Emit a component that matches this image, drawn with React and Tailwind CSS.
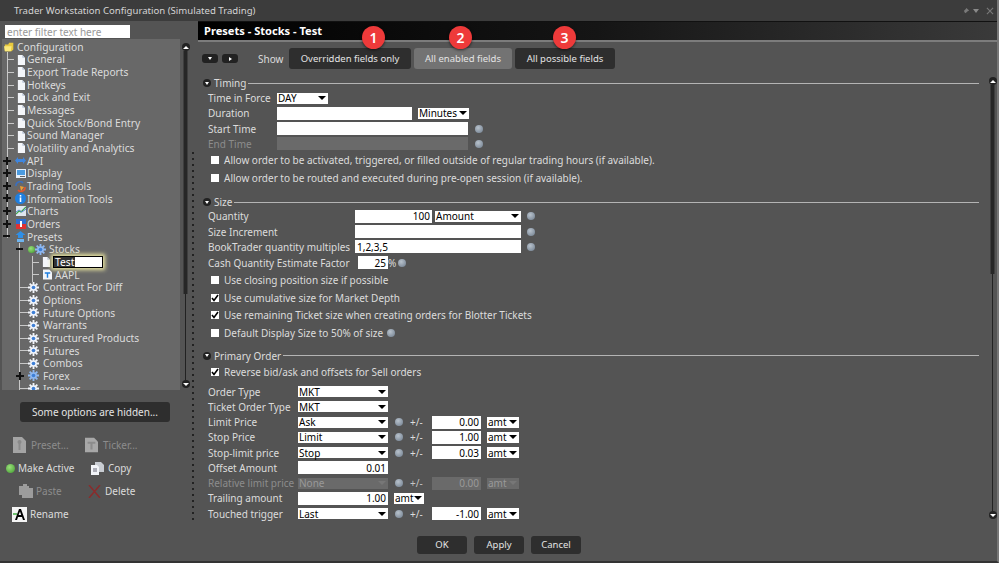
import React from "react";

const Doc = ({ className = "" }) => (
  <svg width="8" height="10" viewBox="0 0 9 11" className={className}>
    <path d="M1 0h5l3 3v8H1z" fill="#f4f6fa" />
    <path d="M6 0l3 3H6z" fill="#b9c4d6" />
  </svg>
);

const Gear = ({ size = 11, color = "#f2f5fb" }) => (
  <svg width={size} height={size} viewBox="0 0 12 12">
    <g stroke={color} strokeWidth="2">
      <path d="M6 0v12M0 6h12M1.800 1.800l8.400 8.400M10.200 1.800l-8.400 8.400" />
    </g>
    <circle cx="6" cy="6" r="3.600" fill={color} />
    <circle cx="6" cy="6" r="2" fill="#3d7fd6" />
  </svg>
);

const Folder = () => (
  <svg width="13" height="12" viewBox="0 0 13 12">
    <path d="M1 3h4l1-2h5v8l-2 2H1z" fill="#e8c93e" />
    <path d="M0 5h9l-1 6H1z" fill="#fbe97c" />
  </svg>
);

const ApiIcon = () => (
  <svg width="11" height="9" viewBox="0 0 11 9">
    <path d="M0 4.500L3 1v2h5V1l3 3.500L8 8V6H3v2z" fill="#3f86de" />
  </svg>
);

const DisplayIcon = () => (
  <svg width="10" height="9" viewBox="0 0 10 9">
    <rect width="10" height="9" fill="#e8f0fa" />
    <rect x="1" y="1" width="8" height="5" fill="#4b9be0" />
    <rect x="4" y="7" width="5" height="1" fill="#666" />
  </svg>
);

const TradingIcon = () => (
  <svg width="11" height="11" viewBox="0 0 11 11">
    <path d="M1 5a4 4 0 0 1 7-3" stroke="#3a6fc0" strokeWidth="1.600" fill="none" />
    <path d="M10 6a4 4 0 0 1-7 3" stroke="#e8552a" strokeWidth="1.600" fill="none" />
    <path d="M5 5l4 1-3 4z" fill="#f0a030" />
  </svg>
);

const InfoIcon = () => (
  <svg width="11" height="11" viewBox="0 0 11 11">
    <circle cx="5.500" cy="5.500" r="5.500" fill="#1f7fe0" />
    <rect x="4.700" y="2" width="1.600" height="1.600" fill="#fff" />
    <rect x="4.700" y="4.400" width="1.600" height="4.600" fill="#fff" />
  </svg>
);

const ChartIcon = () => (
  <svg width="10" height="10" viewBox="0 0 10 10">
    <rect width="10" height="10" fill="#dfe6ee" />
    <path d="M0 8l3-3 2 1 5-5" stroke="#3fa34a" strokeWidth="1.200" fill="none" />
    <path d="M0 6l3-2 3 2 4-3" stroke="#5a8ccc" strokeWidth="1" fill="none" />
  </svg>
);

const OrdersIcon = () => (
  <svg width="10" height="10" viewBox="0 0 10 10">
    <rect width="10" height="5" fill="#2d6fd0" />
    <rect y="5" width="10" height="5" fill="#e03131" />
    <rect x="4" y="2" width="2" height="6" fill="#fff" />
  </svg>
);

const PresetsIcon = () => (
  <svg width="11" height="11" viewBox="0 0 11 11">
    <path d="M5.500 0l5 4H8v3H3V4H.5z" fill="#2f8fe6" />
    <rect x="2" y="8" width="7" height="3" fill="#6fb4ee" />
  </svg>
);

const TickerIcon = ({ color = "#1f7fe0", bg = "#f4f6fa", w = 9, h = 11 }) => (
  <svg width={w} height={h} viewBox="0 0 10 11">
    <path d="M0 0h7l3 3v8H0z" fill={bg} />
    <path d="M2 3h6v1.600H5.800V9H4.200V4.600H2z" fill={color} />
  </svg>
);

const PresetFileIcon = () => (
  <svg width="13" height="16" viewBox="0 0 13 16">
    <path d="M0 0h9l4 4v12H0z" fill="#a4a4a4" />
    <circle cx="6.500" cy="5" r="2" fill="#8a8a8a" />
    <path d="M5.500 6h2v7h-2z" fill="#8a8a8a" />
  </svg>
);

const GreenDot = ({ size = "w-[7px] h-[7px]" }) => (
  <span className={`${size} rounded-full shrink-0 bg-[radial-gradient(circle_at_40%_35%,#9adf7a,#3f9a2e)]`} />
);

const treeRows = [
  { label: "Configuration", pad: "pl-[2px]", gap: "gap-[2px]", icon: <Folder /> },
  { label: "General", pad: "pl-[13px]", leaf: 1, icon: <Doc /> },
  { label: "Export Trade Reports", pad: "pl-[13px]", leaf: 1, icon: <Doc /> },
  { label: "Hotkeys", pad: "pl-[13px]", leaf: 1, icon: <Doc /> },
  { label: "Lock and Exit", pad: "pl-[13px]", leaf: 1, icon: <Doc /> },
  { label: "Messages", pad: "pl-[13px]", leaf: 1, icon: <Doc /> },
  { label: "Quick Stock/Bond Entry", pad: "pl-[13px]", leaf: 1, icon: <Doc /> },
  { label: "Sound Manager", pad: "pl-[13px]", leaf: 1, icon: <Doc /> },
  { label: "Volatility and Analytics", pad: "pl-[13px]", leaf: 1, icon: <Doc /> },
  { label: "API", pad: "pl-[13px]", plus: "left-[1px]", icon: <ApiIcon /> },
  { label: "Display", pad: "pl-[13px]", plus: "left-[1px]", icon: <DisplayIcon /> },
  { label: "Trading Tools", pad: "pl-[13px]", plus: "left-[1px]", icon: <TradingIcon /> },
  { label: "Information Tools", pad: "pl-[13px]", plus: "left-[1px]", icon: <InfoIcon /> },
  { label: "Charts", pad: "pl-[13px]", plus: "left-[1px]", icon: <ChartIcon /> },
  { label: "Orders", pad: "pl-[13px]", plus: "left-[1px]", icon: <OrdersIcon /> },
  { label: "Presets", pad: "pl-[13px]", minus: "left-[1px]", icon: <PresetsIcon /> },
];

const presetRows = [
  { label: "Contract For Diff" },
  { label: "Options" },
  { label: "Future Options" },
  { label: "Warrants" },
  { label: "Structured Products" },
  { label: "Futures" },
  { label: "Combos" },
  { label: "Forex", plus: true, blue: true },
  { label: "Indexes" },
];

const Plus = ({ className = "" }) => (
  <svg width="8" height="8" viewBox="0 0 8 8" className={`absolute top-[2px] ${className}`}>
    <path d="M4 0v8M0 4h8" stroke="#111" strokeWidth="2" />
  </svg>
);

const TreeRow = ({ row }) => (
  <div className={`relative flex h-[12.67px] items-center ${row.gap || "gap-[1px]"} ${row.pad}`}>
    {row.leaf && <span className="absolute left-[5px] top-[6px] h-px w-[7px] bg-[#c8c8c8]" />}
    {row.plus && <Plus className={row.plus} />}
    {row.minus && <span className={`absolute top-[5px] h-[2px] w-[7px] bg-[#111] ${row.minus}`} />}
    <span className="flex w-[11px] shrink-0 justify-center">{row.icon}</span>
    <span className="whitespace-nowrap">{row.label}</span>
  </div>
);

const Tree = () => (
  <div className="relative h-[351px] w-[178px] overflow-hidden bg-[#686868] pt-[1.6px] text-[10.25px] text-[#dcdcdc]">
    <span className="absolute left-[5px] top-[13px] h-[186px] w-px bg-[#c8c8c8]" />
    <span className="absolute left-[17px] top-[204px] h-[147px] w-px bg-[#c8c8c8]" />
    <span className="absolute left-[30px] top-[217px] h-[26px] w-px bg-[#c8c8c8]" />
    {treeRows.map((row) => (
      <TreeRow key={row.label} row={row} />
    ))}
    <div className="relative flex h-[12.67px] items-center pl-[26px]">
      <span className="absolute left-[14px] top-[5px] h-[2px] w-[7px] bg-[#111]" />
      <GreenDot />
      <span className="mr-[3px] flex"><Gear color="#8fb8f0" /></span>
      <span>Stocks</span>
    </div>
    <div className="relative flex h-[12.67px] items-center pl-[40px]">
      <span className="absolute left-[30px] top-[6px] h-px w-[7px] bg-[#c8c8c8]" />
      <Doc />
      <div className="ml-[3px] flex h-[12px] w-[50px] border border-black bg-white shadow-[0_0_4px_2px_#e8e4a0]">
        <span className="bg-[#333] px-[1px] leading-[10px] text-white">Test</span>
      </div>
    </div>
    <div className="relative flex h-[12.67px] items-center gap-[3px] pl-[41px]">
      <span className="absolute left-[30px] top-[6px] h-px w-[7px] bg-[#c8c8c8]" />
      <TickerIcon />
      <span>AAPL</span>
    </div>
    {presetRows.map((row) => (
      <div key={row.label} className="relative flex h-[12.67px] items-center gap-[4px] pl-[26px]">
        {row.plus ? (
          <Plus className="left-[14px]" />
        ) : (
          <span className="absolute left-[17px] top-[6px] h-px w-[9px] bg-[#c8c8c8]" />
        )}
        <Gear color={row.blue ? "#8fb8f0" : "#f2f5fb"} />
        <span className="whitespace-nowrap">{row.label}</span>
      </div>
    ))}
  </div>
);

const ScrollBall = ({ up }) => (
  <span className="flex h-[8px] w-[8px] shrink-0 items-center justify-center rounded-full bg-[#222]">
    <span
      className={`h-0 w-0 border-x-[3px] border-x-transparent ${up ? "border-b-[3px] border-b-white" : "border-t-[3px] border-t-white"}`}
    />
  </span>
);

const Scrollbar = ({ thumb, h }) => (
  <div className={`flex w-[9px] flex-col items-center ${h}`}>
    <ScrollBall up />
    <div className="flex flex-1 flex-col items-center">
      <div className={`w-[5px] rounded-[1px] border-x border-x-[#3e3e3e] bg-[#262626] ${thumb}`} />
      <div className="w-px flex-1 bg-[#222]" />
    </div>
    <ScrollBall />
  </div>
);

const Action = ({ icon, label, dim, pad, gap = "gap-[3px]" }) => (
  <div className={`flex h-[23px] items-center whitespace-nowrap ${gap} ${pad} ${dim ? "text-[#8c8c8c]" : "text-[#dcdcdc]"}`}>
    {icon}
    <span>{label}</span>
  </div>
);

const LeftPanel = () => (
  <div className="flex w-[190px] shrink-0 flex-col">
    <div className="ml-[5px] mt-[4px] flex h-[13px] w-[125px] items-center bg-white pl-[2px] text-[#999]">
      enter filter text here
    </div>
    <div className="ml-[2px] mt-px flex">
      <Tree />
      <div className="ml-[1px] pt-[4px]">
        <Scrollbar thumb="h-[243px]" h="h-[345px]" />
      </div>
    </div>
    <button className="ml-[20px] mt-[12px] h-[20px] w-[150px] rounded-[3px] bg-[#2e2e2e] text-[#e4e4e4]">
      Some options are hidden...
    </button>
    <div className="mt-[11.5px] grid grid-cols-[85px_1fr]">
      <Action dim pad="pl-[13px]" gap="gap-[5px]" label="Preset..." icon={<PresetFileIcon />} />
      <Action dim gap="gap-[5px]" label="Ticker..." icon={<TickerIcon color="#8c8c8c" bg="#a8a8a8" w={13} h={16} />} />
      <Action pad="pl-[6px]" label="Make Active" icon={<GreenDot size="w-[9px] h-[9px]" />} />
      <Action pad="pl-[6px]" gap="gap-[4px]" label="Copy" icon={
        <svg width="13" height="13" viewBox="0 0 13 13">
          <path d="M4 0h6l3 3v7H4z" fill="#c8ccd2" />
          <path d="M0 3h6l2 2v8H0z" fill="#f2f4f8" />
          <path d="M2 7h4M2 9h4" stroke="#667" />
        </svg>
      } />
      <Action dim pad="pl-[19px]" label="Paste" icon={
        <svg width="14" height="14" viewBox="0 0 14 14">
          <path d="M0 2h4V0h4v2h2v2h4v10H3v-3H0z" fill="#9c9c9c" />
        </svg>
      } />
      <Action pad="pl-[3px]" gap="gap-[4px]" label="Delete" icon={
        <svg width="13" height="13" viewBox="0 0 13 13">
          <path d="M1 0l11 13M12 0L1 13" stroke="#8a2c2c" strokeWidth="1.500" />
        </svg>
      } />
      <Action pad="pl-[12px]" label="Rename" icon={
        <svg width="15" height="15" viewBox="0 0 15 15">
          <rect width="15" height="15" fill="#f4f4f4" />
          <path d="M3 13l4-11h2l4 11h-2l-1-3H6l-1 3zM6.600 8h2.600L8 4.500z" fill="#000" />
          <path d="M1 6h4v2H1z" fill="#6fbf6f" />
        </svg>
      } />
    </div>
  </div>
);

const Help = () => (
  <span className="inline-block h-[8px] w-[8px] shrink-0 rounded-full bg-[radial-gradient(circle_at_40%_35%,#b8c2cc,#6e7c8c)]" />
);

const Arrow = ({ dim }) => (
  <span className={`h-0 w-0 shrink-0 border-x-[4px] border-t-[4px] border-x-transparent ${dim ? "border-t-[#777]" : "border-t-black"}`} />
);

const Select = ({ w, value, dim, className = "" }) => (
  <div className={`flex h-[11px] shrink-0 items-center justify-between pl-[1px] pr-[2px] ${w} ${className} ${dim ? "bg-[#6a6a6a] text-[#999]" : "bg-white text-black"}`}>
    <span>{value}</span>
    <Arrow dim={dim} />
  </div>
);

const Input = ({ w, value = "", dim, left, className = "" }) => (
  <div className={`flex h-[13px] shrink-0 items-center px-[2px] ${left ? "" : "justify-end"} ${w} ${className} ${dim ? "bg-[#6a6a6a] text-[#999]" : "bg-white text-black"}`}>
    {value}
  </div>
);

const Section = ({ title, className = "" }) => (
  <div className={`flex h-[12px] items-center text-[#dcdcdc] ${className}`}>
    <span className="ml-[5px] flex h-[8px] w-[8px] items-center justify-center rounded-full bg-[#222]">
      <span className="h-0 w-0 border-x-[2.5px] border-t-[3px] border-x-transparent border-t-white" />
    </span>
    <span className="ml-[3px]">{title}</span>
    <span className="ml-[2px] h-px flex-1 bg-[#b4b4b4]" />
  </div>
);

const Row = ({ label, width, dim, h = "h-[15.25px]", children }) => (
  <div className={`flex items-center pl-[10px] ${h}`}>
    <span className={`shrink-0 whitespace-nowrap ${width} ${dim ? "text-[#8c8c8c]" : "text-[#dcdcdc]"}`}>{label}</span>
    {children}
  </div>
);

const Check = ({ label, on, h = "h-[18px]", help }) => (
  <div className={`flex items-center pl-[13px] text-[#dcdcdc] ${h}`}>
    <span className="flex h-[8px] w-[8px] items-center justify-center bg-white">
      {on && (
        <svg width="8" height="8" viewBox="0 0 8 8">
          <path d="M1 4l2 2.500L7 1" stroke="#000" strokeWidth="1.600" fill="none" />
        </svg>
      )}
    </span>
    <span className="ml-[5px]">{label}</span>
    {help && <span className="ml-[4px] flex"><Help /></span>}
  </div>
);

const Offset = ({ select, value, unit, dim }) => (
  <>
    <Select w="w-[90px]" value={select} dim={dim} />
    <span className="ml-[7px] flex"><Help /></span>
    <span className={`ml-[7px] w-[22px] ${dim ? "text-[#c4c4c4]" : "text-[#dcdcdc]"}`}>+/-</span>
    <Input w="w-[49px]" value={value} dim={dim} />
    <Select w="w-[32px]" value={unit} dim={dim} className="ml-[6px]" />
  </>
);

const Badge = ({ n, className }) => (
  <span className={`absolute top-[-22px] flex h-[23px] w-[23px] items-center justify-center rounded-full bg-[#ee3a3a] text-[14px] font-semibold text-white shadow-[0_1px_3px_rgba(0,0,0,0.6)] ${className}`}>
    {n}
  </span>
);

const RightPanel = () => (
  <div className="flex min-w-0 flex-1 flex-col">
    <div className="flex h-[19px] shrink-0 items-center border-t border-t-[#111] bg-[linear-gradient(90deg,#000_0%,#151515_50%,#3a3a3a_100%)] pl-[6px] text-[11.1px] font-bold text-white">
      Presets - Stocks - Test
    </div>
    <div className="h-[2px] shrink-0 bg-[#7c7c7c]" />
    <div className="relative mt-[6px] flex h-[21px] shrink-0 items-center pl-[4px] text-[9.5px] text-[#dcdcdc]">
      <span className="flex h-[9px] w-[16px] items-center justify-center rounded-[3px] bg-[#222]">
        <span className="h-0 w-0 border-x-[2px] border-t-[3px] border-x-transparent border-t-white" />
      </span>
      <span className="ml-[4px] flex h-[9px] w-[16px] items-center justify-center rounded-[3px] bg-[#222]">
        <span className="h-0 w-0 border-y-[2px] border-l-[3px] border-y-transparent border-l-white" />
      </span>
      <span className="ml-[20px] w-[31px] text-[10px]">Show</span>
      <button className="relative h-[21px] w-[122px] rounded-[3px] bg-[#2e2e2e] text-[#e4e4e4]">
        Overridden fields only
        <Badge n="1" className="left-[73px]" />
      </button>
      <button className="relative ml-[3px] h-[21px] w-[98px] rounded-[3px] bg-[#737373] text-[#e4e4e4]">
        All enabled fields
        <Badge n="2" className="left-[35px]" />
      </button>
      <button className="relative ml-[3px] h-[21px] w-[100px] rounded-[3px] bg-[#2e2e2e] text-[#e4e4e4]">
        All possible fields
        <Badge n="3" className="left-[38px]" />
      </button>
    </div>

    <div className="flex min-h-0 flex-1">
      <div className="w-[781px] shrink-0">
        <Section title="Timing" className="mt-[8px]" />
        <div className="mt-[1.4px]">
          <Row label="Time in Force" width="w-[69px]">
            <Select w="w-[51px]" value="DAY" />
          </Row>
          <Row label="Duration" width="w-[69px]">
            <Input w="w-[135px]" />
            <Select w="w-[51px]" value="Minutes" className="ml-[6px]" />
          </Row>
          <Row label="Start Time" width="w-[69px]">
            <Input w="w-[191px]" />
            <span className="ml-[7px] flex"><Help /></span>
          </Row>
          <Row label="End Time" width="w-[69px]" dim>
            <Input w="w-[191px]" dim />
            <span className="ml-[7px] flex"><Help /></span>
          </Row>
        </div>
        <Check label="Allow order to be activated, triggered, or filled outside of regular trading hours (if available)." />
        <Check label="Allow order to be routed and executed during pre-open session (if available)." />

        <Section title="Size" className="mt-[9px]" />
        <div className="mt-[0.4px]">
          <Row label="Quantity" width="w-[147px]">
            <Input w="w-[77px]" value="100" />
            <Select w="w-[86px]" value="Amount" className="ml-[3px]" />
            <span className="ml-[6px] flex"><Help /></span>
          </Row>
          <Row label="Size Increment" width="w-[147px]">
            <Input w="w-[166px]" />
            <span className="ml-[6px] flex"><Help /></span>
          </Row>
          <Row label="BookTrader quantity multiples" width="w-[147px]">
            <Input w="w-[166px]" value="1,2,3,5" left />
            <span className="ml-[6px] flex"><Help /></span>
          </Row>
          <Row label="Cash Quantity Estimate Factor" width="w-[150px]" h="h-[16px]">
            <Input w="w-[30px]" value="25" />
            <span className="text-[#dcdcdc]">%</span>
            <span className="ml-[2px] flex"><Help /></span>
          </Row>
        </div>
        <div className="mt-[0.7px]">
          <Check h="h-[17.6px]" label="Use closing position size if possible" />
          <Check h="h-[17.6px]" on label="Use cumulative size for Market Depth" />
          <Check h="h-[17.6px]" on label="Use remaining Ticket size when creating orders for Blotter Tickets" />
          <Check h="h-[17.6px]" help label="Default Display Size to 50% of size" />
        </div>

        <Section title="Primary Order" className="mt-[8.4px]" />
        <div className="mt-[1.5px]">
          <Check on label="Reverse bid/ask and offsets for Sell orders" />
        </div>
        <div className="mt-[2.4px]">
          <Row label="Order Type" width="w-[90px]">
            <Select w="w-[90px]" value="MKT" />
          </Row>
          <Row label="Ticket Order Type" width="w-[90px]">
            <Select w="w-[90px]" value="MKT" />
          </Row>
          <Row label="Limit Price" width="w-[90px]">
            <Offset select="Ask" value="0.00" unit="amt" />
          </Row>
          <Row label="Stop Price" width="w-[90px]">
            <Offset select="Limit" value="1.00" unit="amt" />
          </Row>
          <Row label="Stop-limit price" width="w-[90px]">
            <Offset select="Stop" value="0.03" unit="amt" />
          </Row>
          <Row label="Offset Amount" width="w-[90px]">
            <Input w="w-[90px]" value="0.01" />
          </Row>
          <Row label="Relative limit price" width="w-[90px]" dim>
            <Offset select="None" value="0.00" unit="amt" dim />
          </Row>
          <Row label="Trailing amount" width="w-[90px]">
            <Input w="w-[90px]" value="1.00" />
            <Select w="w-[30px]" value="amt" className="ml-[6px]" />
          </Row>
          <Row label="Touched trigger" width="w-[90px]">
            <Offset select="Last" value="-1.00" unit="amt" />
          </Row>
        </div>
      </div>
      <div className="ml-[9px] pt-[8px]">
        <Scrollbar thumb="h-[189px]" h="h-[442px]" />
      </div>
    </div>

    <div className="flex h-[25px] shrink-0 items-start gap-[7px] pl-[219px] text-[9.5px] text-[#e4e4e4]">
      <button className="h-[18px] w-[50px] rounded-[3px] bg-[#2e2e2e]">OK</button>
      <button className="h-[18px] w-[50px] rounded-[3px] bg-[#2e2e2e]">Apply</button>
      <button className="h-[18px] w-[50px] rounded-[3px] bg-[#2e2e2e]">Cancel</button>
    </div>
  </div>
);

export default function App() {
  return (
    <div className="flex h-[563px] w-[999px] flex-col overflow-hidden border-r-2 border-b-2 border-r-[#777] border-b-[#333] bg-[#545454] font-['Noto_Sans',sans-serif] text-[10px] leading-none">
      <div className="flex h-[21px] shrink-0 items-center bg-[#3c3c3c] pl-[14px] pr-[3px] text-[9.6px] text-[#d4d4d4]">
        <span className="flex-1">Trader Workstation Configuration (Simulated Trading)</span>
        <svg width="8" height="8" viewBox="0 0 9 9">
          <path d="M5 1l3 3-2 1-2 2-1-1-2 2 2-2.500-1-1 2-2z" fill="#7a7a7a" />
        </svg>
        <span className="ml-[3px] h-0 w-0 border-x-[3px] border-t-[4px] border-x-transparent border-t-[#8a8a8a]" />
        <svg width="8" height="8" viewBox="0 0 9 9" className="ml-[7px]">
          <path d="M1 1l7 7M8 1L1 8" stroke="#7a7a7a" strokeWidth="1.200" />
        </svg>
      </div>
      <div className="flex min-h-0 flex-1">
        <LeftPanel />
        <div className="w-[8px] shrink-0">
          <div className="mt-[129px] h-[372px] w-[6px] bg-[radial-gradient(circle,#222_1px,transparent_1.2px)] bg-[length:6px_6px]" />
        </div>
        <RightPanel />
      </div>
    </div>
  );
}
